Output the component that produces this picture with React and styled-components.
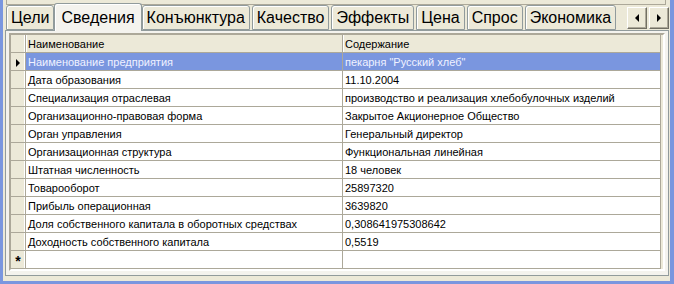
import React from "react";
import styled, { createGlobalStyle } from "styled-components";

const Global = createGlobalStyle`
  html, body { margin: 0; padding: 0; }
  body {
    width: 674px;
    height: 284px;
    overflow: hidden;
    background: #7a96df;
    font-family: Tahoma, "Liberation Sans", "DejaVu Sans", sans-serif;
  }
`;

const Window = styled.div`
  margin: 0 4px 3px 3px;
  height: 281px;
  background: #ece9d8;
  display: flex;
  flex-direction: column;
`;

const TopPanel = styled.div`
  height: 5px;
  margin: 0 4px 0 3px;
  border: 1px solid #aca899;
  border-top: none;
  background: #ece9d8;
`;

const TabStrip = styled.div`
  display: flex;
  align-items: flex-end;
  height: 25px;
  padding-left: 3px;
  position: relative;
  z-index: 1;
`;

const Tab = styled.div`
  height: ${(p) => (p.$active ? 27 : 23)}px;
  margin-bottom: ${(p) => (p.$active ? -1 : 0)}px;
  padding: 0 ${(p) => (p.$active ? 6 : 4)}px;
  margin-right: ${(p) => (p.$active ? 0 : 2)}px;
  margin-left: ${(p) => (p.$active ? -2 : 0)}px;
  display: flex;
  align-items: center;
  font-size: 16px;
  color: #000;
  background: ${(p) => (p.$active ? "#f4f3ee" : "#ece9d8")};
  border: 1px solid #919b9c;
  border-bottom: ${(p) => (p.$active ? "none" : "1px solid #919b9c")};
  border-radius: 3px 3px 0 0;
  box-shadow: inset 1px 1px 0 #fff;
  white-space: nowrap;
`;

const Arrows = styled.div`
  margin-left: auto;
  margin-right: 1px;
  margin-bottom: 1px;
  display: flex;
  gap: 2px;
`;

const ArrowBtn = styled.div`
  width: 20px;
  height: 22px;
  box-sizing: border-box;
  background: #ece9d8;
  border: 1px solid;
  border-color: #fff #716f64 #716f64 #fff;
  box-shadow: inset -1px -1px 0 #aca899;
  display: flex;
  align-items: center;
  justify-content: center;
`;

const TabPage = styled.div`
  flex: 1;
  margin: 0 1px 5px 2px;
  border: 1px solid #919b9c;
  background: #f4f3ee;
  padding: 2px 3px 4px 3px;
  display: flex;
`;

const Grid = styled.div`
  flex: 1;
  border: 2px solid;
  border-color: #aca899 #fff #fff #aca899;
  background: #ece9d8;
  display: flex;
  flex-direction: column;
  overflow: hidden;
`;

const Table = styled.div`
  display: grid;
  grid-template-columns: 15px 317px 318px;
  font-size: 11px;
`;

const Cell = styled.div`
  height: 18px;
  box-sizing: border-box;
  border-right: 1px solid #aca899;
  border-bottom: 1px solid #aca899;
  border-left: 1px solid #aca899;
  margin-left: -1px;
  padding: 0 0 0 2px;
  display: flex;
  align-items: center;
  white-space: nowrap;
  overflow: hidden;
  background: ${(p) => (p.$selected ? "#7a96df" : "#fff")};
  color: ${(p) => (p.$selected ? "#f0f2ff" : "#000")};
`;

const HeadCell = styled(Cell)`
  background: #ece9d8;
  box-shadow: inset 1px 0 0 #fff;
`;

const Indicator = styled.div`
  height: 18px;
  box-sizing: border-box;
  background: #ece9d8;
  border-bottom: 1px solid #aca899;
  border-right: 1px solid #aca899;
  box-shadow: inset -1px 0 0 #fff;
  display: flex;
  align-items: center;
  justify-content: center;
  font-size: 14px;
  font-weight: bold;
  padding-top: 3px;
`;

const Tri = ({ dir }) => (
  <svg width="6" height="9" viewBox="0 0 6 9">
    {dir === "left" ? (
      <polygon points="5,0 5,8 1,4" fill="#000" />
    ) : (
      <polygon points="1,0 1,8 5,4" fill="#000" />
    )}
  </svg>
);

const tabs = [
  "Цели",
  "Сведения",
  "Конъюнктура",
  "Качество",
  "Эффекты",
  "Цена",
  "Спрос",
  "Экономика",
];

const rows = [
  ["Наименование предприятия", 'пекарня "Русский хлеб"'],
  ["Дата образования", "11.10.2004"],
  ["Специализация отраслевая", "производство и реализация хлебобулочных изделий"],
  ["Организационно-правовая форма", "Закрытое Акционерное Общество"],
  ["Орган управления", "Генеральный директор"],
  ["Организационная структура", "Функциональная линейная"],
  ["Штатная численность", "18 человек"],
  ["Товарооборот", "25897320"],
  ["Прибыль операционная", "3639820"],
  ["Доля собственного капитала в оборотных средствах", "0,308641975308642"],
  ["Доходность собственного капитала", "0,5519"],
];

export default function App() {
  return (
    <>
      <Global />
      <Window>
        <TopPanel />
        <TabStrip>
          {tabs.map((t) => (
            <Tab key={t} $active={t === "Сведения"}>
              {t}
            </Tab>
          ))}
          <Arrows>
            <ArrowBtn>
              <Tri dir="left" />
            </ArrowBtn>
            <ArrowBtn>
              <Tri dir="right" />
            </ArrowBtn>
          </Arrows>
        </TabStrip>
        <TabPage>
          <Grid>
            <Table>
              <Indicator />
              <HeadCell>Наименование</HeadCell>
              <HeadCell>Содержание</HeadCell>
              {rows.map(([name, value], i) => (
                <React.Fragment key={name}>
                  <Indicator>
                    {i === 0 && (
                      <svg width="5" height="9" viewBox="0 0 5 9">
                        <polygon points="0,0 0,8 4,4" fill="#000" />
                      </svg>
                    )}
                  </Indicator>
                  <Cell $selected={i === 0}>{name}</Cell>
                  <Cell $selected={i === 0}>{value}</Cell>
                </React.Fragment>
              ))}
              <Indicator>*</Indicator>
              <Cell />
              <Cell />
            </Table>
          </Grid>
        </TabPage>
      </Window>
    </>
  );
}
